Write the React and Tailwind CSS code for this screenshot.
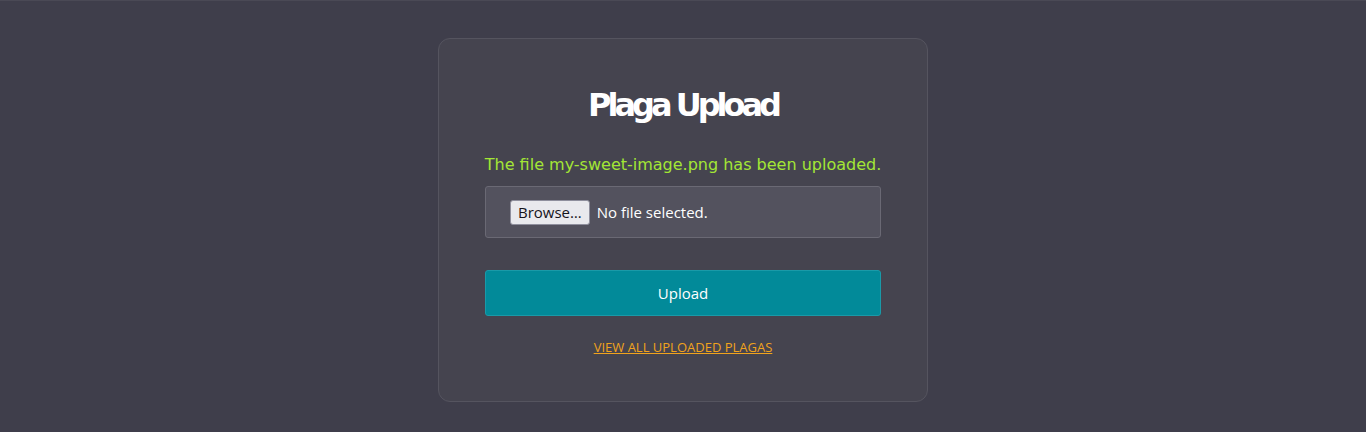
export default function App() {
  return (
    <main className="min-h-screen w-full bg-[#3f3e4b] border-t border-[#4a4955] flex justify-center pt-[37px]">
      <div className="w-[490px] h-[364px] rounded-xl border border-[#55545f] bg-[#45444f] px-[46px] flex flex-col items-center">
        <h1 className="mt-[46px] text-[32px] leading-[40px] font-bold tracking-[-4px] text-white font-['DejaVu_Sans',sans-serif]">
          Plaga Upload
        </h1>
        <p className="mt-[30px] text-[16px] leading-[20px] text-[#a3e635] font-['DejaVu_Sans',sans-serif] whitespace-nowrap">
          The file my-sweet-image.png has been uploaded.
        </p>
        <form className="w-full flex flex-col mt-[11px]">
          <label className="w-full h-[52px] rounded-[3px] border border-[#6a6974] bg-[#53525e] flex items-center pl-[24px] gap-[7px] font-['Open_Sans',sans-serif] text-[15px] text-white">
            <span className="h-[25px] px-[7px] rounded-[3px] border border-[#8f8f9d] bg-[#e9e9ed] text-[#15141a] flex items-center">
              Browse…
            </span>
            <span>No file selected.</span>
          </label>
          <button
            type="button"
            className="mt-[32px] h-[46px] w-full rounded-[3px] border border-[#1a9aa8] bg-[#028a99] text-white text-[15px] font-['Open_Sans',sans-serif]"
          >
            Upload
          </button>
        </form>
        <a
          href="#"
          className="mt-[23px] text-[13px] leading-[16px] underline text-[#f0a31c] font-['Open_Sans',sans-serif]"
        >
          VIEW ALL UPLOADED PLAGAS
        </a>
      </div>
    </main>
  );
}
